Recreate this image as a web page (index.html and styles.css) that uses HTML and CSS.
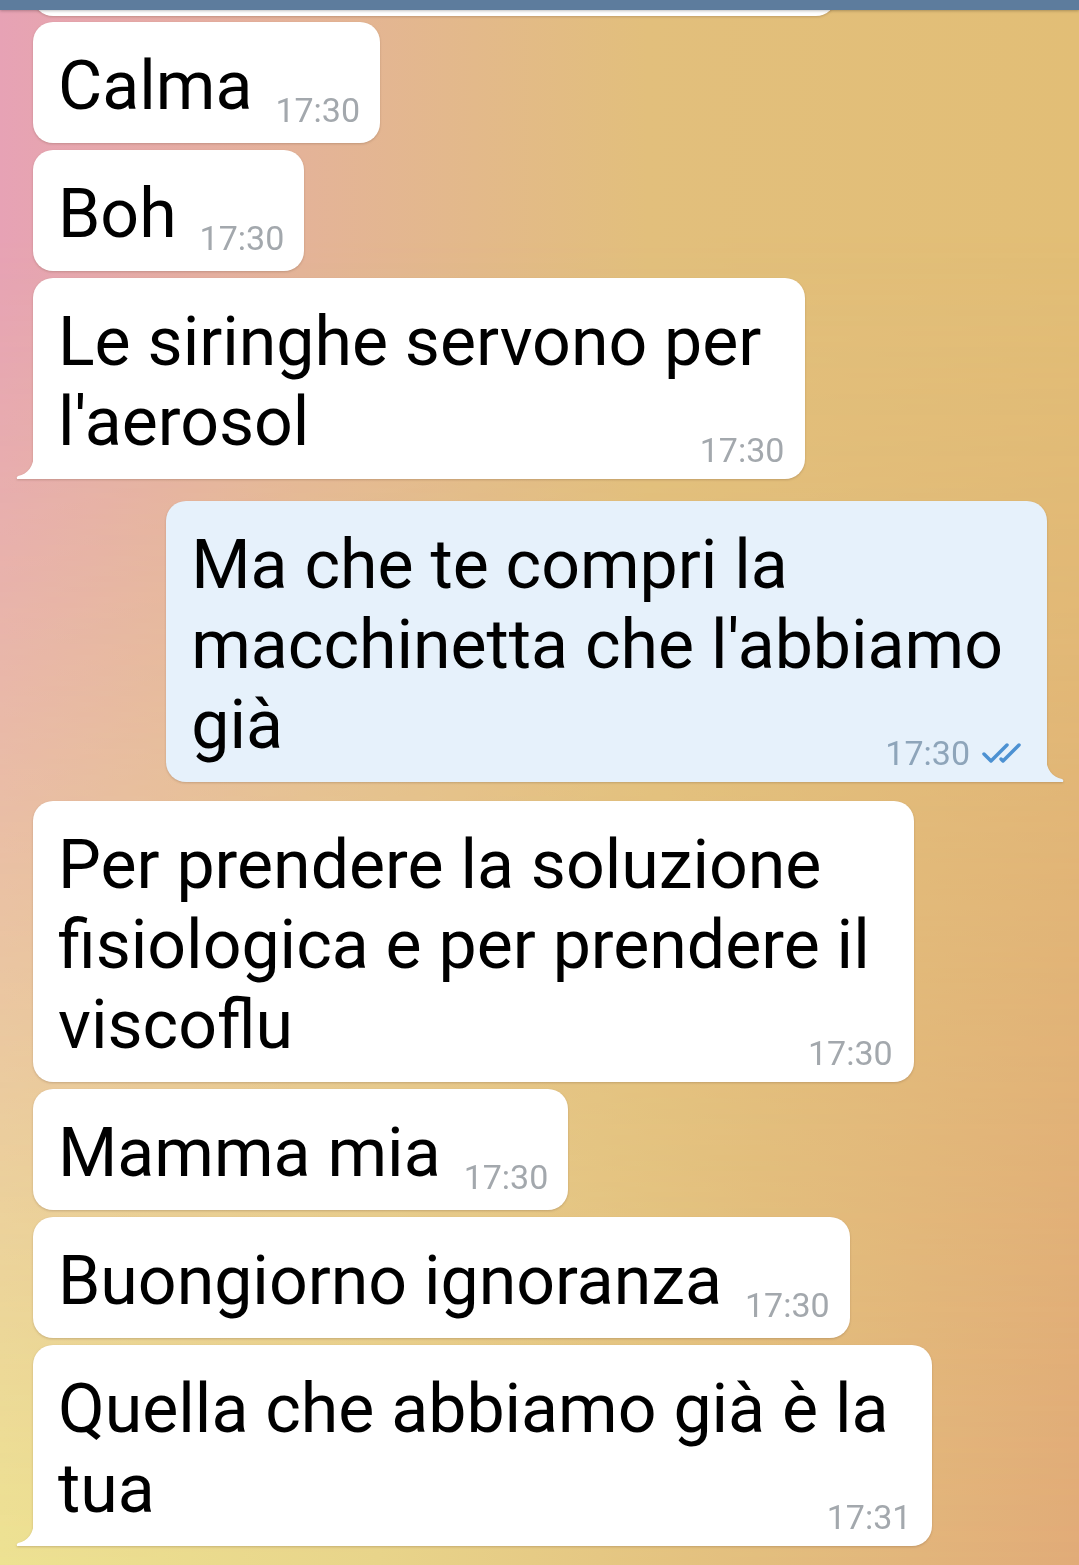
FILE: index.html
```html
<!DOCTYPE html>
<html>
<head>
  <title>Chat</title>
  <meta name="viewport" content="width=device-width, initial-scale=1.0">
  <link rel="stylesheet" href="styles.css">
</head>
<body>
  <div class="topbar"></div>

  <div class="chat">
    <div class="bubble cut"></div>

    <div class="bubble">Calma<span class="time">17:30</span></div>
    <div class="bubble">Boh<span class="time">17:30</span></div>
    <div class="bubble multi tail">
      Le siringhe servono per<br>l'aerosol
      <span class="stamp">17:30</span>
    </div>

    <div class="bubble out multi tail">
      Ma che te compri la<br>macchinetta che l'abbiamo<br>già
      <span class="stamp">17:30
        <svg class="checks" width="46" height="22" viewBox="0 0 46 22">
          <path d="M2 12 L9 19 L25 3" />
          <path d="M19 17 L21 19 L37 3" />
        </svg>
      </span>
    </div>

    <div class="bubble multi first">
      Per prendere la soluzione<br>fisiologica e per prendere il<br>viscoflu
      <span class="stamp">17:30</span>
    </div>
    <div class="bubble">Mamma mia<span class="time">17:30</span></div>
    <div class="bubble">Buongiorno ignoranza<span class="time">17:30</span></div>
    <div class="bubble multi tail">
      Quella che abbiamo già è la<br>tua
      <span class="stamp">17:31</span>
    </div>
  </div>
</body>
</html>
```

FILE: styles.css
```css
* {
  box-sizing: border-box;
}

html, body {
  margin: 0;
  height: 100%;
}

body {
  position: relative;
  min-height: 1565px;
  overflow: hidden;
  font-family: Roboto, "Noto Sans", Arial, sans-serif;
  background: linear-gradient(to right, #e7a2b5 0%, #e4b398 28%, #e2bf7c 60%, #e2be76 100%);
}

/* bottom row of the wallpaper, faded in downwards */
body::before {
  content: "";
  position: absolute;
  inset: 0;
  background: linear-gradient(to right, #ede292 0%, #e8d48a 35%, #e3be7e 70%, #e1ab78 100%);
  -webkit-mask-image: linear-gradient(to bottom, transparent 15%, #000 100%);
  mask-image: linear-gradient(to bottom, transparent 15%, #000 100%);
}

.topbar {
  position: absolute;
  top: 0;
  left: 0;
  right: 0;
  height: 10px;
  background: #5d7c9d;
  box-shadow: 0 1px 3px rgba(0, 0, 0, 0.25);
  z-index: 5;
}

.chat {
  position: relative;
  display: flex;
  flex-direction: column;
  gap: 7px;
  padding: 0 32px 0 33px;
}

.bubble {
  position: relative;
  width: fit-content;
  background: #fff;
  color: #000;
  font-size: 68px;
  line-height: 80px;
  padding: 24px 20px 16px 25px;
  border-radius: 20px;
  filter: drop-shadow(0 1px 1px rgba(90, 60, 40, 0.25));
}

.bubble.cut {
  width: 803px;
  height: 40px;
  margin-top: -24px;
  margin-bottom: -1px;
  padding: 0;
}

.bubble .time {
  display: inline-block;
  margin-left: 23px;
  font-size: 34px;
  line-height: 34px;
  color: #a3a8ad;
  vertical-align: -13px;
}

.bubble.multi {
  padding-right: 44px;
  padding-bottom: 17px;
}

.stamp {
  position: absolute;
  right: 21px;
  bottom: 12px;
  display: flex;
  align-items: center;
  gap: 12px;
  font-size: 34px;
  line-height: 34px;
  color: #a3a8ad;
}

.bubble.tail {
  border-bottom-left-radius: 0;
}

.bubble.tail::after {
  content: "";
  position: absolute;
  left: -17px;
  bottom: 0;
  width: 18px;
  height: 26px;
  background: #fff;
  clip-path: path("M18 0 C18 13 12 21 2 23 Q0 24 1 26 L18 26 Z");
}

.bubble.out {
  align-self: flex-end;
  margin-top: 15px;
  background: #e6f1fb;
  border-bottom-left-radius: 20px;
  border-bottom-right-radius: 0;
}

.bubble.out::after {
  left: auto;
  right: -17px;
  background: #e6f1fb;
  clip-path: path("M0 0 C0 13 6 21 16 23 Q18 24 17 26 L0 26 Z");
}

.bubble.out .stamp {
  right: 19px;
  color: #8ea5ba;
}

.checks path {
  fill: none;
  stroke: #4c91d2;
  stroke-width: 3.5;
  stroke-linecap: round;
  stroke-linejoin: round;
}

.bubble.first {
  margin-top: 12px;
}
```
